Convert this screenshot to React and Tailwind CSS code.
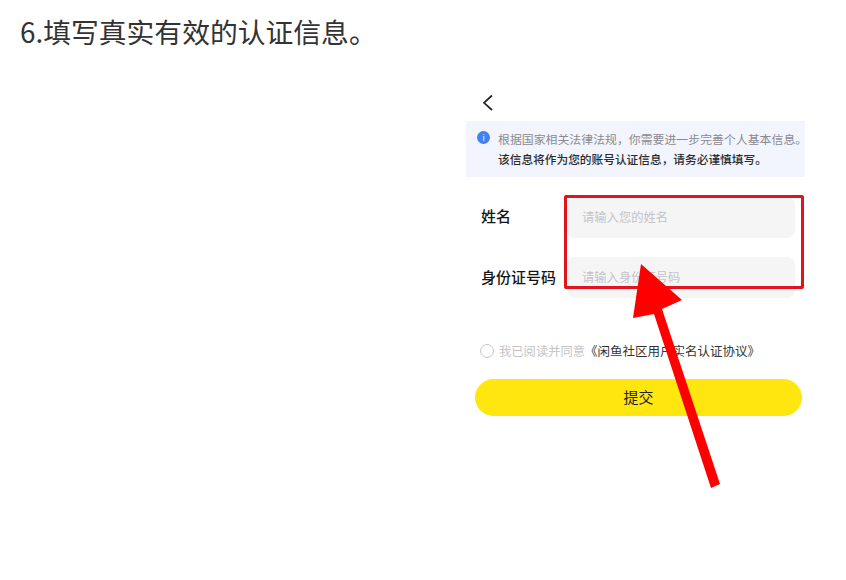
const cjk = { fontFamily: '"Noto Sans CJK SC", "Noto Sans", sans-serif' };

export default function App() {
  return (
    <div className="relative w-[846px] h-[580px] overflow-hidden bg-white" style={cjk}>
      <h1 className="pl-5 pt-[11px] h-[89px] text-[27.8px] leading-[40px] font-normal text-[#333333]">6.填写真实有效的认证信息。</h1>

      <div className="ml-[466px] w-[339px]">
        <div className="h-[32px] pl-[15px] pt-[5px]">
          <svg width="14" height="18" viewBox="0 0 14 18" fill="none" stroke="#222" strokeWidth="1.7">
            <path d="M11 1.5 L3 8.8 L11 16" />
          </svg>
        </div>

        <div className="h-[56px] bg-[#f2f5fd] pl-[11px] pt-[8px] flex gap-[8px]">
          <div className="mt-[2px] w-[13px] h-[13px] rounded-full bg-[#3f82f0] text-white text-[8px] leading-[13px] text-center shrink-0">i</div>
          <div className="text-[11.9px] leading-[20px] whitespace-nowrap">
            <p className="text-[#8a8a8f]">根据国家相关法律法规，你需要进一步完善个人基本信息。</p>
            <p className="text-[11.7px] text-[#2a2a2a] font-medium">该信息将作为您的账号认证信息，请务必谨慎填写。</p>
          </div>
        </div>

        <div className="pt-[20px] pl-[15px] pr-[10px] flex flex-col gap-[19px]">
          <div className="flex items-center h-[41px]">
            <span className="w-[86px] pb-[2px] text-[15px] font-medium text-[#151515]">姓名</span>
            <div className="flex-1 h-full rounded-lg bg-[#f5f5f6] pl-[15px] flex items-center text-[12.3px] text-[#c4c4c6]">请输入您的姓名</div>
          </div>
          <div className="flex items-center h-[41px]">
            <span className="w-[86px] pb-[1px] text-[15px] font-medium text-[#151515] whitespace-nowrap">身份证号码</span>
            <div className="flex-1 h-full rounded-lg bg-[#f5f5f6] pl-[15px] flex items-center text-[12.3px] text-[#c4c4c6]">请输入身份证号码</div>
          </div>
        </div>

        <div className="mt-[43px] pl-[14px] flex items-center h-[20px] text-[12.3px] whitespace-nowrap">
          <span className="w-[14px] h-[14px] rounded-full border border-[#c8c8c8] shrink-0" />
          <span className="ml-[5px] text-[#c4c4c6]">我已阅读并同意</span>
          <span className="text-[12.5px] text-[#333333]">《闲鱼社区用户实名认证协议》</span>
        </div>

        <button className="mt-[18px] ml-[9px] w-[327px] h-[37px] rounded-full bg-[#ffe60f] text-[15px] text-[#222] block">提交</button>
      </div>

      <div className="absolute left-[564px] top-[195px] w-[240px] h-[94px] border-[3px] border-[#e0141c] rounded-[2px]" />

      <svg className="absolute left-0 top-0" width="846" height="580" viewBox="0 0 846 580">
        <polygon points="641,264 682,300 662,309 720,484 711,488 654,314 633,318" fill="#fe0000" />
      </svg>
    </div>
  );
}
